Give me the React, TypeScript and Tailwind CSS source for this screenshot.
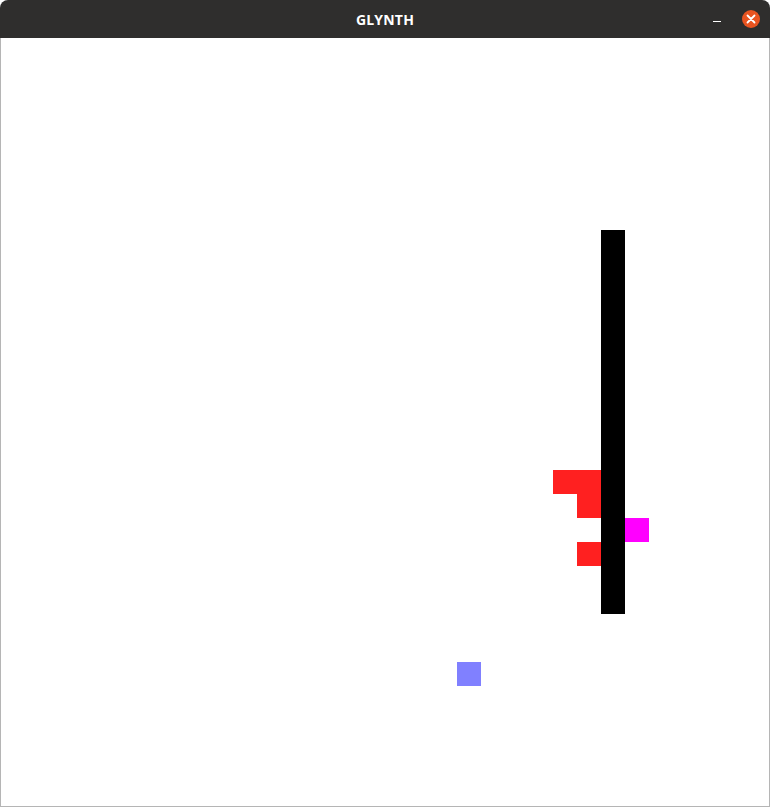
import React from "react";

type Cell = { col: number; row: number; color: string };

const CELL = 24;

const cells: Cell[] = [
  ...Array.from({ length: 16 }, (_, i) => ({ col: 25, row: 8 + i, color: "#000000" })),
  { col: 23, row: 18, color: "#ff2020" },
  { col: 24, row: 18, color: "#ff2020" },
  { col: 24, row: 19, color: "#ff2020" },
  { col: 24, row: 21, color: "#ff2020" },
  { col: 26, row: 20, color: "#ff00ff" },
  { col: 19, row: 26, color: "#8080ff" },
];

export default function App() {
  return (
    <div className="w-[770px] h-[807px] bg-white flex flex-col overflow-hidden">
      <div className="h-[38px] shrink-0 bg-[#2f2e2d] rounded-t-[8px] flex items-center relative">
        <div className="flex-1 text-center text-white font-bold text-[14px] font-['Open_Sans',sans-serif] tracking-[0.2px]">
          GLYNTH
        </div>
        <div className="absolute right-[10px] top-[10px] flex items-center gap-[21px]">
          <div className="w-[8px] h-[1px] bg-white mt-[4px]" />
          <div className="w-[18px] h-[18px] rounded-full bg-[#e95420] flex items-center justify-center">
            <svg width="10" height="10" viewBox="0 0 10 10">
              <path d="M1.5 1.5 L8.5 8.5 M8.5 1.5 L1.5 8.5" stroke="white" strokeWidth="1.8" strokeLinecap="round" />
            </svg>
          </div>
        </div>
      </div>
      <div className="flex-1 border-x border-b border-[#b5b5b5] bg-white">
        <div className="relative w-[768px] h-[768px]">
          {cells.map((c, i) => (
            <div
              key={i}
              className="absolute"
              style={{ left: c.col * CELL, top: c.row * CELL, width: CELL, height: CELL, background: c.color }}
            />
          ))}
        </div>
      </div>
    </div>
  );
}
